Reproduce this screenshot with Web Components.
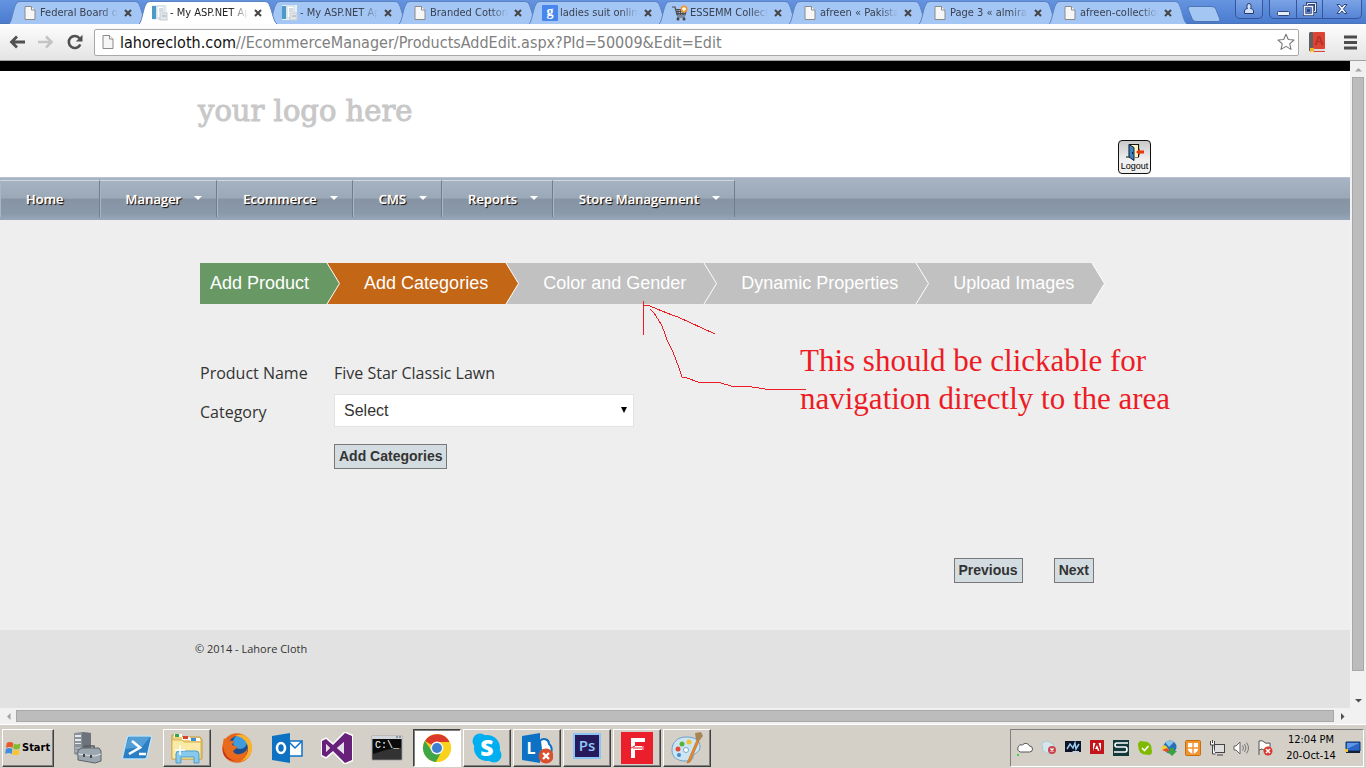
<!DOCTYPE html>
<html lang="en">
<head>
<meta charset="utf-8">
<title>- My ASP.NET Application</title>
<style>
  html { height: 100%; }
  body { margin: 0; min-height: 100vh; display: flex; flex-direction: column; overflow: hidden;
    font-family: "Open Sans", "Noto Sans", sans-serif; color: #333; background: #efeeef;
    --ui: "DejaVu Sans Condensed", "DejaVu Sans", sans-serif; }
</style>
</head>
<body>
<app-window></app-window>
<script>
const define = (name, html) => customElements.define(name, class extends HTMLElement {
  connectedCallback() {
    if (this.shadowRoot) return;
    const t = document.createElement('template');
    t.innerHTML = '<style>*{box-sizing:border-box}</style>' + (typeof html === 'function' ? html(this) : html);
    this.attachShadow({ mode: 'open' }).append(t.content.cloneNode(true));
  }
});

const ICONS = {
  page: ['0 0 12 14', '<path d="M1 .5h6.500l3.500 3.500v9.500h-10z" fill="#f6f6f6" stroke="#8a8a8a"/><path d="M7.500 .5v3.500h3.500" fill="#fff" stroke="#8a8a8a"/>'],
  site: ['0 0 16 16', '<rect x="0" y="0" width="15" height="15" fill="#e9f1f6"/><rect x="0" y="1" width="4" height="13" fill="#4b9bc8"/><rect x="5" y="1" width="7" height="12" fill="#fff" stroke="#c9d3da"/><path d="M7 4h4M7 6h4" stroke="#a9b7c2"/><rect x="8" y="8" width="7" height="7" fill="#e3e7ea" stroke="#c4ccd2"/><path d="M10 11h4" stroke="#9eaab3"/>'],
  google: ['0 0 16 16', '<rect width="16" height="16" rx="1" fill="#4787ed"/><text x="8" y="11" text-anchor="middle" font-family="Liberation Serif,serif" font-weight="700" font-size="14" fill="#fff">g</text>'],
  cart: ['0 0 16 16', '<path d="M0 2h3l2 8h8l1.500-5.500h-11M4.500 6.500h9M5 8.500h8M6 4v6M8.500 4v6M11 4v6M5 12h8" fill="none" stroke="#4d4d4d" stroke-width="1.200"/><circle cx="6" cy="14" r="1.500" fill="#444"/><circle cx="12" cy="14" r="1.500" fill="#444"/><circle cx="12" cy="4" r="3.500" fill="#f7962f"/><path d="M12 2v4M10 4h4" stroke="#fff" stroke-width="1.500"/>'],
  back: ['0 0 16 14', '<path d="M8 1.500L2.500 7L8 12.500M3 7h13" fill="none" stroke="#505050" stroke-width="2.800"/>'],
  forward: ['0 0 16 14', '<path d="M8 1.500L13.500 7L8 12.500M13 7H0" fill="none" stroke="#c4c4c4" stroke-width="2.600"/>'],
  reload: ['0 0 16 16', '<path d="M12.500 4.200A6 6 0 1 0 13.300 10.500" fill="none" stroke="#505050" stroke-width="2.600"/><path d="M15.500 .8v6.700H8.800z" fill="#505050"/>'],
  star: ['0 0 18 18', '<path d="M9 1.200l2.300 5.300 5.700.5-4.300 3.800 1.300 5.600L9 13.400l-5 3 1.300-5.600L1 7l5.700-.5z" fill="#fff" stroke="#777" stroke-width="1.100" stroke-linejoin="round"/>'],
  book: ['0 0 16 21', '<path d="M1 0h3v19H0V1z" fill="#5d5f63"/><rect x="4" width="12" height="17" rx="1" fill="#dd4436"/><text x="10" y="13" text-anchor="middle" font-family="Liberation Sans,sans-serif" font-weight="700" font-size="13" fill="#b52f25">A</text><path d="M4 17h11v2H4z" fill="#ddd"/><path d="M4 19h12v1H4z" fill="#dd4436"/><path d="M1 16h4v5l-2-2-2 2z" fill="#f1b72c"/>'],
  menu: ['0 0 13 15', '<path d="M0 2h13M0 7.500h13M0 13h13" stroke="#4c4c4c" stroke-width="3"/>'],
  user: ['0 0 12 12', '<path d="M4 2.500a2 2 0 1 1 4 0v2l-.5 1c2 .5 3 1 3 2.500v2.500h-9V8c0-1.500 1-2 3-2.500l-.5-1z" fill="#cfe0f7" stroke="#26396b"/>'],
  min: ['0 0 13 14', '<rect x=".5" y="9.500" width="12" height="4" rx="1" fill="#e7effb" stroke="#33477c"/>'],
  restore: ['0 0 14 14', '<path d="M4.500 1.500h8v8h-8z" fill="none" stroke="#33477c" stroke-width="3"/><path d="M4.500 1.500h8v8h-8z" fill="none" stroke="#e7effb"/><rect x="1.500" y="4.500" width="8" height="8" fill="#5a86d2" stroke="#33477c" stroke-width="3"/><rect x="1.500" y="4.500" width="8" height="8" fill="none" stroke="#e7effb" stroke-width="1.500"/><rect x="4" y="7" width="3" height="3" fill="#33477c"/>'],
  winclose: ['0 0 14 12', '<path d="M2 1.500h3l2 2.500 2-2.500h3L8.500 6l3.500 4.500H9L7 8l-2 2.500H2L5.500 6z" fill="#e7effb" stroke="#33477c"/>'],
  logout: ['0 0 18 18', '<path d="M0 14h4M9 14h4M3.500 14V1.500h9V14" fill="#f9f3e0" stroke="#111" stroke-width="1.200"/><path d="M5 2h7v12H5z" fill="#fff6bf"/><path d="M3 1.500l5 3v13l-5-3.500z" fill="#3b83c3" stroke="#123"/><path d="M10 9l4-3.500v2h4v3h-4v2z" fill="#e03a10"/><rect x="6" y="9" width="1" height="2" fill="#024"/>'],
  flag: ['0 0 16 14', '<g transform="skewX(-8) translate(2 0)"><path d="M0 2q3-2 6.500 0v5q-3-2-6.500 0z" fill="#e8592a"/><path d="M7.200 2.500q3 2 6.500 0v5q-3 2-6.500 0z" fill="#80ba2f"/><path d="M0 8q3-2 6.500 0v5q-3-2-6.500 0z" fill="#3d8ee0"/><path d="M7.200 8.500q3 2 6.500 0v5q-3 2-6.500 0z" fill="#f8c530"/></g>'],
  server: ['0 0 32 32', '<path d="M3 1l8-1 9 1v22l-9 2-8-3z" fill="#8b9299"/><path d="M11 0l9 1v22l-9 2z" fill="#6c737a"/><path d="M4 3h6v2H4zM4 7h6v2H4zM4 11h6v1H4z" fill="#e3e8ec"/><path d="M4 16h6M4 19h6" stroke="#c8ced3"/><path d="M14 17v-3h9v3" fill="none" stroke="#555d64" stroke-width="1.500"/><path d="M7 18l4-2h17l2 3v10l-6 2-17-3z" fill="#9ba6af" stroke="#5a646c"/><path d="M7 22l17 2 6-2" stroke="#dfe5ea" fill="none"/><path d="M13 22v3M20 23v3" stroke="#444" stroke-width="2"/>'],
  shell: ['0 0 32 32', '<path d="M8 4h21q2 0 1.500 2L26 25q-.5 2-2 2H3q-2 0-1.500-2L6 6q.5-2 2-2z" fill="#2b7fc4" stroke="#bfe0f3" stroke-width="1.500"/><path d="M8 5h21L21 15 4 17z" fill="#6cb4e4" opacity=".6"/><path d="M11 9l8 6.500L8 22M18 22h7" fill="none" stroke="#fff" stroke-width="2.600"/>'],
  explorer: ['0 0 32 32', '<path d="M1 3h9l2 2h17l2 3v19H1z" fill="#f0d179" stroke="#c29a3d"/><path d="M3 2h8v3H3z" fill="#fff"/><path d="M4 2h4v3H4z" fill="#2aa84a"/><path d="M11 5h8v3h-8z" fill="#fff"/><path d="M12 4h5v3h-5z" fill="#d9432f"/><path d="M19 6h10v3H19z" fill="#fff"/><path d="M20 6h5v3h-5z" fill="#3b8ed8"/><path d="M1 8h10l2 2h17v17H1z" fill="#faeaa6" stroke="#d5b357"/><path d="M5 31v-9q0-3 3-3h17q3 0 3 3v9h-5v-6H10v6z" fill="#86c9ec" stroke="#4f9dca"/><path d="M9 13v10M4 18h10" stroke="#fff" stroke-width="1.500"/>'],
  firefox: ['0 0 32 32', '<circle cx="16" cy="16" r="14.800" fill="#e8661b"/><circle cx="18" cy="14" r="10.500" fill="#1d4d8c"/><circle cx="19" cy="10" r="7" fill="#3f9bdb"/><path d="M14 4q7-4 13 2 5 5 4 12-2 9-12 12 11-8 7-18-4-8-12-8z" fill="#f9b22b"/><path d="M3 6l4 4q3-2 6-1l-2 4 6 2-5 4q2 4 7 3 6-1 8-7 0 9-8 11-9 2-14-4-5-7-2-16z" fill="#ea6a1d"/><path d="M2 14q1 12 12 15Q0 28 2 14z" fill="#c5351a"/>'],
  outlook: ['0 0 32 32', '<rect x="17" y="9" width="14" height="15" fill="#fff" stroke="#0e72c4" stroke-width="1.500"/><path d="M17 9l7 7 7-7" fill="none" stroke="#0e72c4" stroke-width="1.500"/><path d="M1 4l18-3v30L1 28z" fill="#0e72c4"/><ellipse cx="10" cy="16" rx="4" ry="5" fill="none" stroke="#fff" stroke-width="2.600"/>'],
  vstudio: ['0 0 32 32', '<path d="M1 9l4-2 7 6L24 1l7 3v24l-7 3-12-12-7 6-4-2z" fill="none" stroke="#fff" stroke-width="3" stroke-linejoin="round"/><path fill-rule="evenodd" d="M1 9l4-2 7 6L24 1l7 3v24l-7 3-12-12-7 6-4-2zM5 12v8l4-4zM23 10l-7 6 7 6z" fill="#68217a"/><path d="M5 12v8l4-4zM23 10v12l-7-6z" fill="#e6dfe6"/>'],
  cmd: ['0 0 32 32', '<path d="M1 4h30v24H1z" fill="#0a0a0a" stroke="#a6a6a6"/><path d="M1 4h30v3H1z" fill="#d2d5da"/><path d="M25 5h2M28 5h2" stroke="#456"/><path d="M2 22q16-6 28-6v11H2z" fill="#333"/><text x="4" y="16" font-family="Liberation Mono,monospace" font-size="10" fill="#fff">C:\\_</text>'],
  chrome: ['0 0 32 32', '<circle cx="16" cy="16" r="14" fill="#f6cb16"/><path d="M16 16L4 9A14 14 0 0 1 28.500 10H16z" fill="#db3a2b"/><path d="M3.800 9A14 14 0 0 0 15 30l6-11-10 0z" fill="#3fa648"/><path d="M28.500 10A14 14 0 0 1 15 30l6-11 1-9z" fill="#f9d21a"/><circle cx="16" cy="16" r="6.500" fill="#f5f5f5"/><circle cx="16" cy="16" r="5" fill="#3b7fd0"/>'],
  skype: ['0 0 32 32', '<circle cx="16" cy="16" r="13" fill="#00aff0"/><circle cx="9" cy="9" r="7.500" fill="#00aff0"/><circle cx="23" cy="23" r="7.500" fill="#00aff0"/><text x="16" y="24" text-anchor="middle" font-family="Open Sans,sans-serif" font-weight="800" font-size="23" fill="#fff">S</text>'],
  lync: ['0 0 32 32', '<path d="M19 9a5 5 0 0 1 9 3q4 3 2 9l-9 4z" fill="#fff" stroke="#0e72c4" stroke-width="2"/><path d="M1 4l18-3v30L1 28z" fill="#0e72c4"/><text x="10" y="22" text-anchor="middle" font-family="Open Sans,sans-serif" font-weight="700" font-size="16" fill="#fff">L</text><circle cx="25" cy="24" r="7.500" fill="#d9502f"/><path d="M22 21l6 6M28 21l-6 6" stroke="#fff" stroke-width="2.400"/>'],
  photoshop: ['0 0 32 32', '<rect x="2" y="1" width="28" height="26" fill="#8cc5f5"/><rect x="4" y="3" width="24" height="22" fill="#261a5c"/><text x="16" y="19" text-anchor="middle" font-family="Open Sans,sans-serif" font-weight="600" font-size="15" fill="#90c8f7">Ps</text>'],
  flash: ['0 0 32 32', '<rect width="32" height="32" fill="#ea1f2b"/><path d="M10 26V6h14v4H14v4h9v4h-9v8z" fill="#fff"/><path d="M14 14l-4 2M12 16h11M20 13l4 3-4 3" stroke="#ea1f2b" fill="none"/>'],
  paint: ['0 0 32 32', '<path d="M15 5c9 0 14 3 14 10 0 6-7 6-7 10 0 3-3 4-8 4C6 29 1 25 1 18 1 11 6 5 15 5z" fill="#cde5f3" stroke="#6ba3c6"/><circle cx="7" cy="17" r="2.500" fill="#e44b35"/><circle cx="11" cy="12" r="2.500" fill="#56b23d"/><circle cx="18" cy="10" r="2.500" fill="#f2c32e"/><circle cx="8" cy="23" r="2" fill="#3d8ad1"/><circle cx="15" cy="18" r="2.500" fill="#fff" stroke="#7aa9c7"/><path d="M26 8l2 1-9 21-3 1z" fill="#e88929" stroke="#b9651b" stroke-width=".6"/><path d="M24 1l6-1 2 4-4 5-3-1z" fill="#a88555"/>'],
  cloud: ['0 0 16 16', '<path d="M3.500 12h9a3 3 0 0 0 0-6 4 4 0 0 0-7-1 3.500 3.500 0 0 0-2 7z" fill="#fff" stroke="#555"/><rect x="0" y="14" width="2" height="2" fill="#3d3"/>'],
  msn: ['0 0 16 16', '<path d="M1 3l5-2 6 3 2 7-6 3-6-3z" fill="#d5e6ee" stroke="#b3cad6"/><circle cx="11" cy="10" r="4" fill="#c8454a"/><path d="M9.500 8.500l3 3M12.500 8.500l-3 3" stroke="#fff" stroke-width="1.400"/>'],
  monitor: ['0 0 16 16', '<rect y="1" width="16" height="11" fill="#0b1527"/><path d="M2 9l3-5 3 4 2-5 1 6 3-5" stroke="#9cc9ee" stroke-width="1.500" fill="none"/><path d="M4 15v-3h4v2h6v-3h-6z" fill="#c8cfd5"/>'],
  adobe: ['0 0 16 16', '<rect x="1" width="14" height="14" fill="#c4141b"/><path d="M4 11V3h2.500zM12 11V3H9.500zM6 9l2-4 2.500 6H9L8 9z" fill="#fff"/>'],
  sbadge: ['0 0 16 16', '<rect width="16" height="16" fill="#123a3c"/><path d="M15 3H4q-2 0-2 2t2 2h8q2 0 2 2.500T12 12H1" fill="none" stroke="#fff" stroke-width="1.600"/>'],
  skypeok: ['0 0 16 16', '<circle cx="8" cy="8" r="6.500" fill="#7fba00"/><circle cx="4.500" cy="4.500" r="3.500" fill="#7fba00"/><circle cx="11.500" cy="11.500" r="3.500" fill="#7fba00"/><path d="M5 8l2.500 2.500L11.500 6" stroke="#fff" stroke-width="1.600" fill="none"/>'],
  idm: ['0 0 16 16', '<circle cx="9" cy="7" r="6.500" fill="#2a70b8"/><path d="M4 2q5-3 9 0l-5 5z" fill="#8ac4e8"/><path d="M0 8q3-5 6-1l2 3-3 2z" fill="#f2d12d"/><path d="M1 10l5 2 3-1-3-3z" fill="#e34c26"/><path d="M9 8h4v3h3l-5 5-5-5h3z" fill="#3aa340"/>'],
  shield: ['0 0 16 16', '<rect x=".5" y=".5" width="15" height="15" rx="1" fill="#f2932d" stroke="#c66d10"/><path d="M3 3h10v6q0 3-5 5-5-2-5-5z" fill="#fff"/><path d="M8 3v11M3 8h10" stroke="#f2932d" stroke-width="1.400"/>'],
  network: ['0 0 16 16', '<rect x="5.500" y="4.500" width="10" height="8" fill="#dedede" stroke="#444"/><path d="M8 15h6" stroke="#444"/><path d="M1.500 1v4h4V1M3.500 0v3M3.500 5v9h3" fill="#fff" stroke="#444"/>'],
  speaker: ['0 0 16 16', '<path d="M1 6h2l4-4v12l-4-4H1z" fill="#fff" stroke="#666"/><path d="M9.500 5.500q2 2.500 0 5M11.500 4q3 4 0 8M13.500 2.500q4 5.500 0 11" fill="none" stroke="#777"/>'],
  alert: ['0 0 16 16', '<path d="M2 1v14M2 1q4-1 5 1t6 1v8q-4 1-6-1t-5 0" fill="#fff" stroke="#555"/><circle cx="11" cy="11" r="4.500" fill="#d9392f"/><path d="M9 9l4 4M13 9l-4 4" stroke="#fff" stroke-width="1.500"/>'],
  desktop: ['0 0 16 16', '<path d="M1 2h14v9H1z" fill="#2a66c8" stroke="#0c3069"/><path d="M2 3h12L2 9z" fill="#5d97e6"/><path d="M1 11h14v2H1z" fill="#123"/><path d="M0 9h3v3H0z" fill="#f1c335"/>']
};

define('ui-icon', el => {
  const [box, art] = ICONS[el.getAttribute('name')];
  const w = box.split(' ')[2];
  return `<style>:host{display:block;flex:none;width:${w}px}svg{display:block;width:100%}</style>
  <svg viewBox="${box}" aria-hidden="true">${art}</svg>`;
});

define('app-window', `
<style>
  :host { display: flex; flex-direction: column; flex: 1; }
  .view { flex: 1; display: grid; grid-template-columns: 1fr 16px; grid-template-rows: 1fr 16px; background: #f1f1f1; }
  .page { display: flex; flex-direction: column; background: #e2e2e2; min-width: 0; overflow: hidden; }
</style>
<tab-strip></tab-strip>
<tool-bar></tool-bar>
<div class="view">
  <div class="page">
    <site-header></site-header>
    <site-nav></site-nav>
    <site-main></site-main>
    <site-footer></site-footer>
  </div>
  <scroll-bar dir="v"></scroll-bar>
  <scroll-bar dir="h"></scroll-bar>
</div>
<task-bar></task-bar>`);

define('tab-strip', `
<style>
  :host { display: flex; height: 24px; padding-left: 9px; background: linear-gradient(#6594e0, #4a7bcf); border-bottom: 1px solid #4a76b8; }
  button { appearance: none; border: 0; background: none; padding: 0; display: grid; place-items: center; }
  .new { width: 34px; height: 16px; margin: 6px 0 0 8px; }
  .new svg { display: block; }
  .win { display: flex; margin-left: auto; padding-right: 4px; gap: 6px; }
  .win div { display: flex; height: 19px; border: 1px solid #33569c; border-top: 0; border-radius: 0 0 5px 5px; background: linear-gradient(#7ba3e6, #5684d4); }
  .win button { width: 26px; }
  .win button + button { border-left: 1px solid #33569c; }
  .win .x { width: 39px; }
</style>
<browser-tab icon="page">Federal Board of</browser-tab>
<browser-tab icon="site" active>- My ASP.NET Ap</browser-tab>
<browser-tab icon="site">- My ASP.NET Ap</browser-tab>
<browser-tab icon="page">Branded Cotton</browser-tab>
<browser-tab icon="google">ladies suit online</browser-tab>
<browser-tab icon="cart">ESSEMM Collecti</browser-tab>
<browser-tab icon="page">afreen « Pakistan</browser-tab>
<browser-tab icon="page">Page 3 « almirah</browser-tab>
<browser-tab icon="page">afreen-collection</browser-tab>
<button class="new" aria-label="New tab"><svg width="34" height="16" viewBox="0 0 34 16"><path d="M3 .5h22q3 0 4 3l4 10q0 2-2 2H9q-3 0-4-3L1 3q0-2.500 2-2.500z" fill="#a4c6f3" stroke="#4d74b4"/></svg></button>
<div class="win">
  <div><button aria-label="User"><ui-icon name="user"></ui-icon></button></div>
  <div>
    <button aria-label="Minimize"><ui-icon name="min"></ui-icon></button>
    <button aria-label="Restore"><ui-icon name="restore"></ui-icon></button>
    <button class="x" aria-label="Close"><ui-icon name="winclose"></ui-icon></button>
  </div>
</div>`);

define('browser-tab', el => `
<style>
  :host { position: relative; display: flex; align-items: center; flex: 0 1 130px; min-width: 0; height: 24px; padding: 2px 7px 0 13px; z-index: ${el.hasAttribute('active') ? 2 : 1};
    font: 11px/20px var(--ui); color: ${el.hasAttribute('active') ? '#222' : '#3a4250'}; }
  .shape { position: absolute; inset: 1px -8px 0 0; width: calc(100% + 8px); height: 23px; z-index: -1; }
  .title { flex: 1; min-width: 0; margin-left: 3px; overflow: hidden; white-space: nowrap; -webkit-mask-image: linear-gradient(90deg, #000 78%, transparent); mask-image: linear-gradient(90deg, #000 78%, transparent); }
  .ic { width: 15px; display: grid; place-items: center; }
  button { appearance: none; border: 0; background: none; padding: 0; width: 8px; height: 20px; margin: 0 0 0 6px; display: grid; place-items: center; }
</style>
<svg class="shape" viewBox="0 0 138 23" preserveAspectRatio="none"><path d="M0 23C3 21 4 8 7 3Q8 .5 11 .5H126Q129 .5 130 3C134 12 134 20 138 23" fill="${el.hasAttribute('active') ? '#fff' : '#a4c6f5'}" stroke="#5a83c0"/></svg>
<span class="ic"><ui-icon name="${el.getAttribute('icon')}"></ui-icon></span>
<span class="title"><slot></slot></span>
<button aria-label="Close tab"><svg width="8" height="8" viewBox="0 0 8 8"><path d="M1 1l6 6M7 1l-6 6" stroke="#444" stroke-width="2"/></svg></button>`);

define('tool-bar', `
<style>
  :host { display: flex; align-items: center; height: 37px; padding: 0 9px; background: linear-gradient(#fdfdfd, #e4e4e4); border-bottom: 1px solid #a2a2a2; }
  button { appearance: none; border: 0; background: none; padding: 0; display: block; }
  .nav { display: flex; gap: 13px; align-items: center; width: 85px; }
  .box { position: relative; flex: 1; display: flex; align-items: center; height: 27px; padding: 0 3px 0 7px; background: #fff; border: 1px solid #a9a9a9; border-radius: 2px; }
  .field { position: relative; flex: 1; margin-left: 6px; height: 24px; font: 16px/26px var(--ui); color: #808080; white-space: nowrap; }
  .field b { font-weight: 400; color: #111; }
  .book { margin-left: 10px; }
  .menu { margin-left: 19px; }
</style>
<div class="nav">
  <button aria-label="Back"><ui-icon name="back"></ui-icon></button>
  <button aria-label="Forward"><ui-icon name="forward"></ui-icon></button>
  <button aria-label="Reload"><ui-icon name="reload"></ui-icon></button>
</div>
<div class="box">
  <ui-icon name="page"></ui-icon>
  <div class="field" role="textbox" contenteditable="true" spellcheck="false" aria-label="Address"><b>lahorecloth.com</b>//EcommerceManager/ProductsAddEdit.aspx?PId=50009&amp;Edit=Edit</div>
  <button aria-label="Bookmark"><ui-icon name="star"></ui-icon></button>
</div>
<button class="book" aria-label="Dictionary"><ui-icon name="book"></ui-icon></button>
<button class="menu" aria-label="Menu"><ui-icon name="menu"></ui-icon></button>`);

define('scroll-bar', el => {
  const v = el.getAttribute('dir') === 'v';
  return `<style>
  :host { display: flex; flex-direction: ${v ? 'column' : 'row'}; align-items: center; background: #f1f1f1; }
  i { flex: none; width: 16px; height: 16px; display: grid; place-items: center; }
  .track { flex: 1; align-self: stretch; display: flex; flex-direction: inherit; padding: ${v ? '0 2px' : '2px 0'}; }
  .thumb { flex: ${v ? '594' : '1'}; background: #bcbcbc; border: 1px solid #a8a8a8; }
  .rest { flex: ${v ? '21' : '0'}; }
  </style>
  <i><svg width="7" height="7" viewBox="0 0 7 7"><path d="${v ? 'M0 5.500L3.500 2L7 5.500z' : 'M5.500 0L2 3.500L5.500 7z'}" fill="#a3a3a3"/></svg></i>
  <div class="track"><div class="thumb"></div><div class="rest"></div></div>
  <i><svg width="7" height="7" viewBox="0 0 7 7"><path d="${v ? 'M0 2L3.500 5.500L7 2z' : 'M2 0L5.500 3.500L2 7z'}" fill="#505050"/></svg></i>`;
});

define('site-header', `
<style>
  :host { display: block; background: #fff; border-top: 10px solid #000; }
  .in { max-width: 960px; margin: 0 auto; height: 106px; display: flex; justify-content: space-between; padding: 0 4px 3px 3px; }
  a { color: #c8c8c8; text-decoration: none; font: 29px/40px "DejaVu Serif", serif; -webkit-text-stroke: 1px #c8c8c8; margin-top: 20px; height: 40px; }
  button { align-self: flex-end; width: 33px; height: 34px; padding: 2px 0 0; border: 1px solid #111; border-radius: 4px; background: linear-gradient(#c9c9c9, #f0f0f0 60%); display: flex; flex-direction: column; align-items: center; font: 9px/11px "Liberation Sans", Arial, sans-serif; color: #000; }
</style>
<div class="in"><a href="#">your logo here</a>
<button><ui-icon name="logout"></ui-icon>Logout</button></div>`);

define('site-nav', `
<style>
  :host { display: flex; height: 43px; padding: 2px 0 3px; background: linear-gradient(#a8b4c3, #9aa8b7 48%, #8593a3 50%, #8b9aab 85%, #97a6b9); border-top: 1px solid #b7c2ce; }
</style>
<nav-item>Home</nav-item><nav-item menu>Manager</nav-item><nav-item menu>Ecommerce</nav-item><nav-item menu>CMS</nav-item><nav-item menu>Reports</nav-item><nav-item menu>Store Management</nav-item>`);

define('nav-item', el => `
<style>
  :host { display: block; border-top: 1px solid #cfd7e0; border-right: 1px solid #6f7d8c; border-left: 1px solid #aab6c3; }
  a { display: flex; align-items: center; height: 100%; padding: 0 ${el.hasAttribute('menu') ? 14 : 35}px 0 25px; color: #fff; text-decoration: none; white-space: nowrap; font: 600 13px/18px "Open Sans", sans-serif; -webkit-text-stroke: 0 #fff; text-shadow: 1px 1px 1px #000, 0 0 1px #fff; }
  i { width: 0; height: 0; margin: 0 0 2px 13px; border: 4px solid transparent; border-top-color: #fff; border-bottom: 0; }
</style>
<a href="#"><slot></slot>${el.hasAttribute('menu') ? '<i></i>' : ''}</a>`);

define('site-main', `
<style>
  :host { display: block; background: #eee; padding: 43px 0 47px; }
  .in { position: relative; max-width: 950px; margin: 0 auto; }
  product-form { margin-top: 51px; }
  .pager { display: flex; gap: 31px; margin: 89px 0 0; max-width: 894px; justify-content: flex-end; }
  red-note { position: absolute; left: 443px; top: 37px; }
</style>
<div class="in">
  <wizard-steps></wizard-steps>
  <product-form></product-form>
  <div class="pager"><form-button>Previous</form-button><form-button>Next</form-button></div>
  <red-note></red-note>
</div>`);

define('wizard-steps', `
<style>:host { display: flex; }</style>
<wizard-step first style="--c:#689965">Add Product</wizard-step>
<wizard-step style="--c:#c36616">Add Categories</wizard-step>
<wizard-step style="--c:#c1c1c1">Color and Gender</wizard-step>
<wizard-step style="--c:#c1c1c1">Dynamic Properties</wizard-step>
<wizard-step style="--c:#c1c1c1">Upload Images</wizard-step>`);

define('wizard-step', el => `
<style>
  :host { position: relative; display: block; background: var(--c); color: #fff; font: 18px/41px "Liberation Sans", Arial, sans-serif; padding: 0 18px 0 ${el.hasAttribute('first') ? 10 : 37}px; white-space: nowrap; }
  svg { position: absolute; left: 100%; top: 0; z-index: 1; overflow: visible; fill: var(--c); stroke: #fff; }
</style>
<slot></slot><svg width="13" height="41" viewBox="0 0 13 41"><path d="M-1 0H0L12.500 20.500L0 41H-1z" stroke="none"/><path d="M0 0L12.500 20.500L0 41" fill="none"/></svg>`);

define('form-button', `
<style>
  :host { display: inline-block; }
  button { display: block; height: 25px; padding: 0 4px; border: 1px solid #787878; border-radius: 0; background: #d3dce0; color: #333; font: 700 14px/23px "Liberation Sans", Arial, sans-serif; }
</style>
<button type="button"><slot></slot></button>`);

define('product-form', `
<style>
  :host { display: block; color: #333; font: 16px/20px "Open Sans", "Noto Sans", sans-serif; }
  form { display: grid; grid-template-columns: 134px 300px; }
  .name { padding: 8px 0 11px; }
  label { padding-top: 8px; }
  .pick { position: relative; }
  select { appearance: none; display: block; width: 100%; height: 33px; padding: 0 9px; margin: 0; border: 1px solid #e2e2e2; border-radius: 0; background: #fff; color: #333; font: 16px/24px "Liberation Sans", Arial, sans-serif; }
  .pick i { position: absolute; right: 7px; top: 13px; border: 3px solid transparent; border-top: 6px solid #000; border-bottom: 0; pointer-events: none; }
  form-button { grid-column: 2; margin-top: 17px; justify-self: start; }
</style>
<form>
  <span class="name">Product Name</span><span class="name">Five Star Classic Lawn</span>
  <label for="cat">Category</label>
  <div class="pick"><select id="cat"><option>Select</option></select><i></i></div>
  <form-button>Add Categories</form-button>
</form>`);

define('red-note', `
<style>
  :host { display: flex; pointer-events: none; color: #ed1c24; }
  svg { flex: none; overflow: visible; fill: none; stroke: #ed1c24; shape-rendering: crispEdges; }
  p { margin: 42px 0 0 -6px; white-space: nowrap; font: 31px/38px "Liberation Serif", "Times New Roman", serif; }
</style>
<svg width="163" height="92" viewBox="0 0 163 92"><path d="M.5 1v34M1 5l6 1 7 3 15 6 6 2 37 17M7 9l4 4 7 11 3 7 3 9 6 12 6 16 3 9 5 1 11 4 23 1 10 3 21 1 13 2h41"/></svg>
<p>This should be clickable for<br>navigation directly to the area</p>`);

define('site-footer', `
<style>
  :host { display: block; flex: 1; background: #e2e2e2; }
  p { max-width: 960px; margin: 0 auto; padding: 11px 0; font: 11px/16px "Open Sans", "Noto Sans", sans-serif; color: #333; }
</style>
<p>© 2014 - Lahore Cloth</p>`);

define('task-bar', `
<style>
  :host { display: flex; align-items: center; height: 44px; padding: 3px 2px 1px; background: #d4d0c8; border-top: 1px solid #fff; font-family: var(--ui); color: #000; }
  .start { appearance: none; display: flex; align-items: center; gap: 1px; width: 52px; height: 38px; padding: 0 2px; margin-right: 9px; border: 1px solid; border-color: #fff #404040 #404040 #fff; box-shadow: inset -1px -1px #808080; background: #d4d0c8; color: #000; font: 700 11px/16px var(--ui); }
  .apps { display: flex; gap: 2px; }
  .tray { margin-left: auto; display: flex; align-items: center; height: 38px; padding: 0 2px 0 6px; border: 1px solid; border-color: #808080 #fff #fff #808080; }
  .icons { display: flex; gap: 8px; }
  .clock { width: 72px; padding-left: 4px; text-align: center; font: 11px/16px var(--ui); white-space: nowrap; }
</style>
<button class="start"><ui-icon name="flag"></ui-icon>Start</button>
<div class="apps">
  <task-button icon="server"></task-button><task-button icon="shell"></task-button><task-button icon="explorer" open></task-button>
  <task-button icon="firefox"></task-button><task-button icon="outlook"></task-button><task-button icon="vstudio"></task-button>
  <task-button icon="cmd"></task-button><task-button icon="chrome" active></task-button><task-button icon="skype" open></task-button>
  <task-button icon="lync" open></task-button><task-button icon="photoshop" open></task-button><task-button icon="flash" open></task-button>
  <task-button icon="paint" open></task-button>
</div>
<div class="tray">
  <div class="icons">
    <ui-icon name="cloud"></ui-icon><ui-icon name="msn"></ui-icon><ui-icon name="monitor"></ui-icon><ui-icon name="adobe"></ui-icon>
    <ui-icon name="sbadge"></ui-icon><ui-icon name="skypeok"></ui-icon><ui-icon name="idm"></ui-icon><ui-icon name="shield"></ui-icon>
    <ui-icon name="network"></ui-icon><ui-icon name="speaker"></ui-icon><ui-icon name="alert"></ui-icon>
  </div>
  <div class="clock">12:04 PM<br>20-Oct-14</div>
  <ui-icon name="desktop"></ui-icon>
</div>`);

define('task-button', el => `
<style>
  :host { display: block; }
  button { appearance: none; width: 48px; height: 38px; padding: 0; display: grid; place-items: center; background: none; border: 1px solid transparent; }
  .open { background: #d4d0c8; border-color: #fff #404040 #404040 #fff; box-shadow: inset -1px -1px #808080; }
  .active { background: #fff; border-color: #404040 #fff #fff #404040; box-shadow: inset 1px 1px #808080; }
</style>
<button class="${el.hasAttribute('active') ? 'active' : el.hasAttribute('open') ? 'open' : ''}" aria-label="${el.getAttribute('icon')}"><ui-icon name="${el.getAttribute('icon')}"></ui-icon></button>`);
</script>
</body>
</html>
